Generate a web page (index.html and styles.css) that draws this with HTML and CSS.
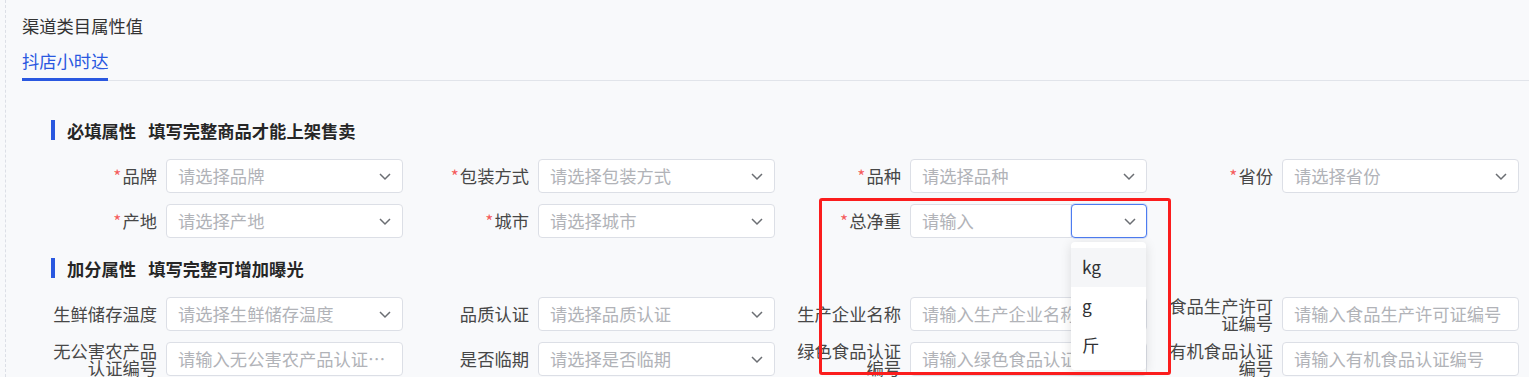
FILE: index.html
```html
<!DOCTYPE html>
<html lang="zh-CN">

<head>
    <meta charset="UTF-8">
    <meta name="viewport" content="width=device-width, initial-scale=1.0">
    <title>渠道类目属性值</title>
    <link rel="stylesheet" href="styles.css">
</head>

<body>
    <div class="page">
        <div class="title">渠道类目属性值</div>
        <div class="tabs">
            <div class="tab active">抖店小时达</div>
        </div>

        <!-- 必填属性 -->
        <div class="section-title"><span class="bar"></span>必填属性<span class="tip">填写完整商品才能上架售卖</span></div>
        <div class="form-grid">
            <div class="field">
                <label class="label"><span class="req">*</span>品牌</label>
                <div class="control select"><span class="ph">请选择品牌</span><svg class="arrow" viewBox="0 0 12 12"><polyline points="1,4 6,9 11,4"/></svg></div>
            </div>
            <div class="field">
                <label class="label"><span class="req">*</span>包装方式</label>
                <div class="control select"><span class="ph">请选择包装方式</span><svg class="arrow" viewBox="0 0 12 12"><polyline points="1,4 6,9 11,4"/></svg></div>
            </div>
            <div class="field">
                <label class="label"><span class="req">*</span>品种</label>
                <div class="control select"><span class="ph">请选择品种</span><svg class="arrow" viewBox="0 0 12 12"><polyline points="1,4 6,9 11,4"/></svg></div>
            </div>
            <div class="field">
                <label class="label"><span class="req">*</span>省份</label>
                <div class="control select"><span class="ph">请选择省份</span><svg class="arrow" viewBox="0 0 12 12"><polyline points="1,4 6,9 11,4"/></svg></div>
            </div>

            <div class="field">
                <label class="label"><span class="req">*</span>产地</label>
                <div class="control select"><span class="ph">请选择产地</span><svg class="arrow" viewBox="0 0 12 12"><polyline points="1,4 6,9 11,4"/></svg></div>
            </div>
            <div class="field">
                <label class="label"><span class="req">*</span>城市</label>
                <div class="control select"><span class="ph">请选择城市</span><svg class="arrow" viewBox="0 0 12 12"><polyline points="1,4 6,9 11,4"/></svg></div>
            </div>
            <div class="field">
                <label class="label"><span class="req">*</span>总净重</label>
                <div class="group">
                    <div class="control group-input"><span class="ph">请输入</span></div>
                    <div class="control select unit focused">
                        <span class="ph"></span><svg class="arrow" viewBox="0 0 12 12"><polyline points="1,4 6,9 11,4"/></svg>
                        <!-- unit dropdown (open) -->
                        <ul class="dropdown">
                            <li class="hover">kg</li>
                            <li>g</li>
                            <li>斤</li>
                        </ul>
                    </div>
                </div>
            </div>
            <div class="field empty"></div>
        </div>

        <!-- 加分属性 -->
        <div class="section-title second"><span class="bar"></span>加分属性<span class="tip">填写完整可增加曝光</span></div>
        <div class="form-grid">
            <div class="field">
                <label class="label">生鲜储存温度</label>
                <div class="control select"><span class="ph">请选择生鲜储存温度</span><svg class="arrow" viewBox="0 0 12 12"><polyline points="1,4 6,9 11,4"/></svg></div>
            </div>
            <div class="field">
                <label class="label">品质认证</label>
                <div class="control select"><span class="ph">请选择品质认证</span><svg class="arrow" viewBox="0 0 12 12"><polyline points="1,4 6,9 11,4"/></svg></div>
            </div>
            <div class="field">
                <label class="label">生产企业名称</label>
                <div class="control"><span class="ph">请输入生产企业名称</span></div>
            </div>
            <div class="field">
                <label class="label">食品生产许可证编号</label>
                <div class="control"><span class="ph">请输入食品生产许可证编号</span></div>
            </div>

            <div class="field">
                <label class="label">无公害农产品认证编号</label>
                <div class="control"><span class="ph">请输入无公害农产品认证编号</span></div>
            </div>
            <div class="field">
                <label class="label">是否临期</label>
                <div class="control select"><span class="ph">请选择是否临期</span><svg class="arrow" viewBox="0 0 12 12"><polyline points="1,4 6,9 11,4"/></svg></div>
            </div>
            <div class="field">
                <label class="label">绿色食品认证编号</label>
                <div class="control"><span class="ph">请输入绿色食品认证编号</span></div>
            </div>
            <div class="field">
                <label class="label">有机食品认证编号</label>
                <div class="control"><span class="ph">请输入有机食品认证编号</span></div>
            </div>
        </div>
    </div>

    <!-- red annotation frame -->
    <div class="mark"></div>
</body>

</html>
```

FILE: styles.css
```css
body {
    margin: 0;
    background-color: #f8f9fb;
    font-family: "Noto Sans CJK SC", "Noto Sans", sans-serif;
    font-size: 17.3px;
    color: #333;
    overflow: hidden;
}

.page {
    margin-left: 5px;
    min-height: 100vh;
    border-left: 1px dashed #dcdfe6;
    padding-left: 16px;
    box-sizing: border-box;
}

.title {
    padding-top: 14px;
    line-height: 24px;
    color: #333;
}

.tabs {
    margin-top: 11px;
    display: flex;
    box-shadow: inset 0 -1px 0 #e1e4ea; /* gray baseline */
}

.tab {
    line-height: 24px;
    padding-bottom: 5px;
    color: #2a58e0;
    border-bottom: 3px solid #2a58e0;
}

.section-title {
    display: flex;
    align-items: center;
    height: 20px;
    margin-top: 39px;
    margin-left: 29px;
    font-weight: bold;
    color: #262626;
}

.section-title .tip {
    margin-left: 12px;
}

.section-title.second {
    margin-top: 20px;
}

.section-title .bar {
    width: 4px;
    height: 20px;
    background-color: #2a58e0;
    margin-right: 12px;
}

.form-grid {
    display: grid;
    grid-template-columns: repeat(4, 362px);
    grid-auto-rows: 34px;
    column-gap: 10px;
    row-gap: 11px;
    margin-top: 19px;
    margin-left: 19px;
}

.field {
    display: flex;
    align-items: center;
}

.label {
    width: 125px;
    padding-right: 9px;
    padding-bottom: 1px;
    box-sizing: border-box;
    flex-shrink: 0;
    text-align: right;
    line-height: 17px;
    color: #474747;
}

.req {
    color: #f5595a;
    margin-right: 1px;
}

.control {
    width: 237px;
    height: 34px;
    box-sizing: border-box;
    border: 1px solid #dcdfe6;
    border-radius: 4px;
    background-color: #fff;
    display: flex;
    align-items: center;
    padding: 0 11px 2px;
    position: relative;
}

.ph {
    flex: 1;
    min-width: 0;
    color: #b1b3b8;
    white-space: nowrap;
    overflow: hidden;
    text-overflow: ellipsis;
}

.arrow {
    width: 12px;
    height: 12px;
    flex-shrink: 0;
    margin-left: 6px;
    margin-top: 2px;
}

.arrow polyline {
    fill: none;
    stroke: #6b6e73;
    stroke-width: 1.5;
}

.group {
    display: flex;
    width: 237px;
}

.group-input {
    width: 162px;
    border-radius: 4px 0 0 4px;
}

.unit {
    width: 76px;
    margin-left: -1px;
    padding-right: 10px;
}

.focused {
    border-color: #4d7cf0;
    box-shadow: 0 0 0 1px rgba(77, 124, 240, 0.18);
}

/* open unit menu */
.dropdown {
    position: absolute;
    top: 37px;
    left: -1px;
    width: 75px;
    margin: 0;
    padding: 6px 0 5px;
    list-style: none;
    background-color: #fff;
    border-radius: 4px;
    box-shadow: 0 2px 12px rgba(0, 0, 0, 0.12);
    z-index: 5;
}

.dropdown li {
    height: 39px;
    line-height: 37px;
    padding-left: 11px;
    color: #303133;
}

.dropdown li.hover {
    background-color: #f5f6f8;
}

.mark {
    position: absolute;
    left: 819px;
    top: 198px;
    width: 352px;
    height: 177px;
    box-sizing: border-box;
    border: 3px solid #fb1d1d;
    border-radius: 3px;
    z-index: 10;
}
```
